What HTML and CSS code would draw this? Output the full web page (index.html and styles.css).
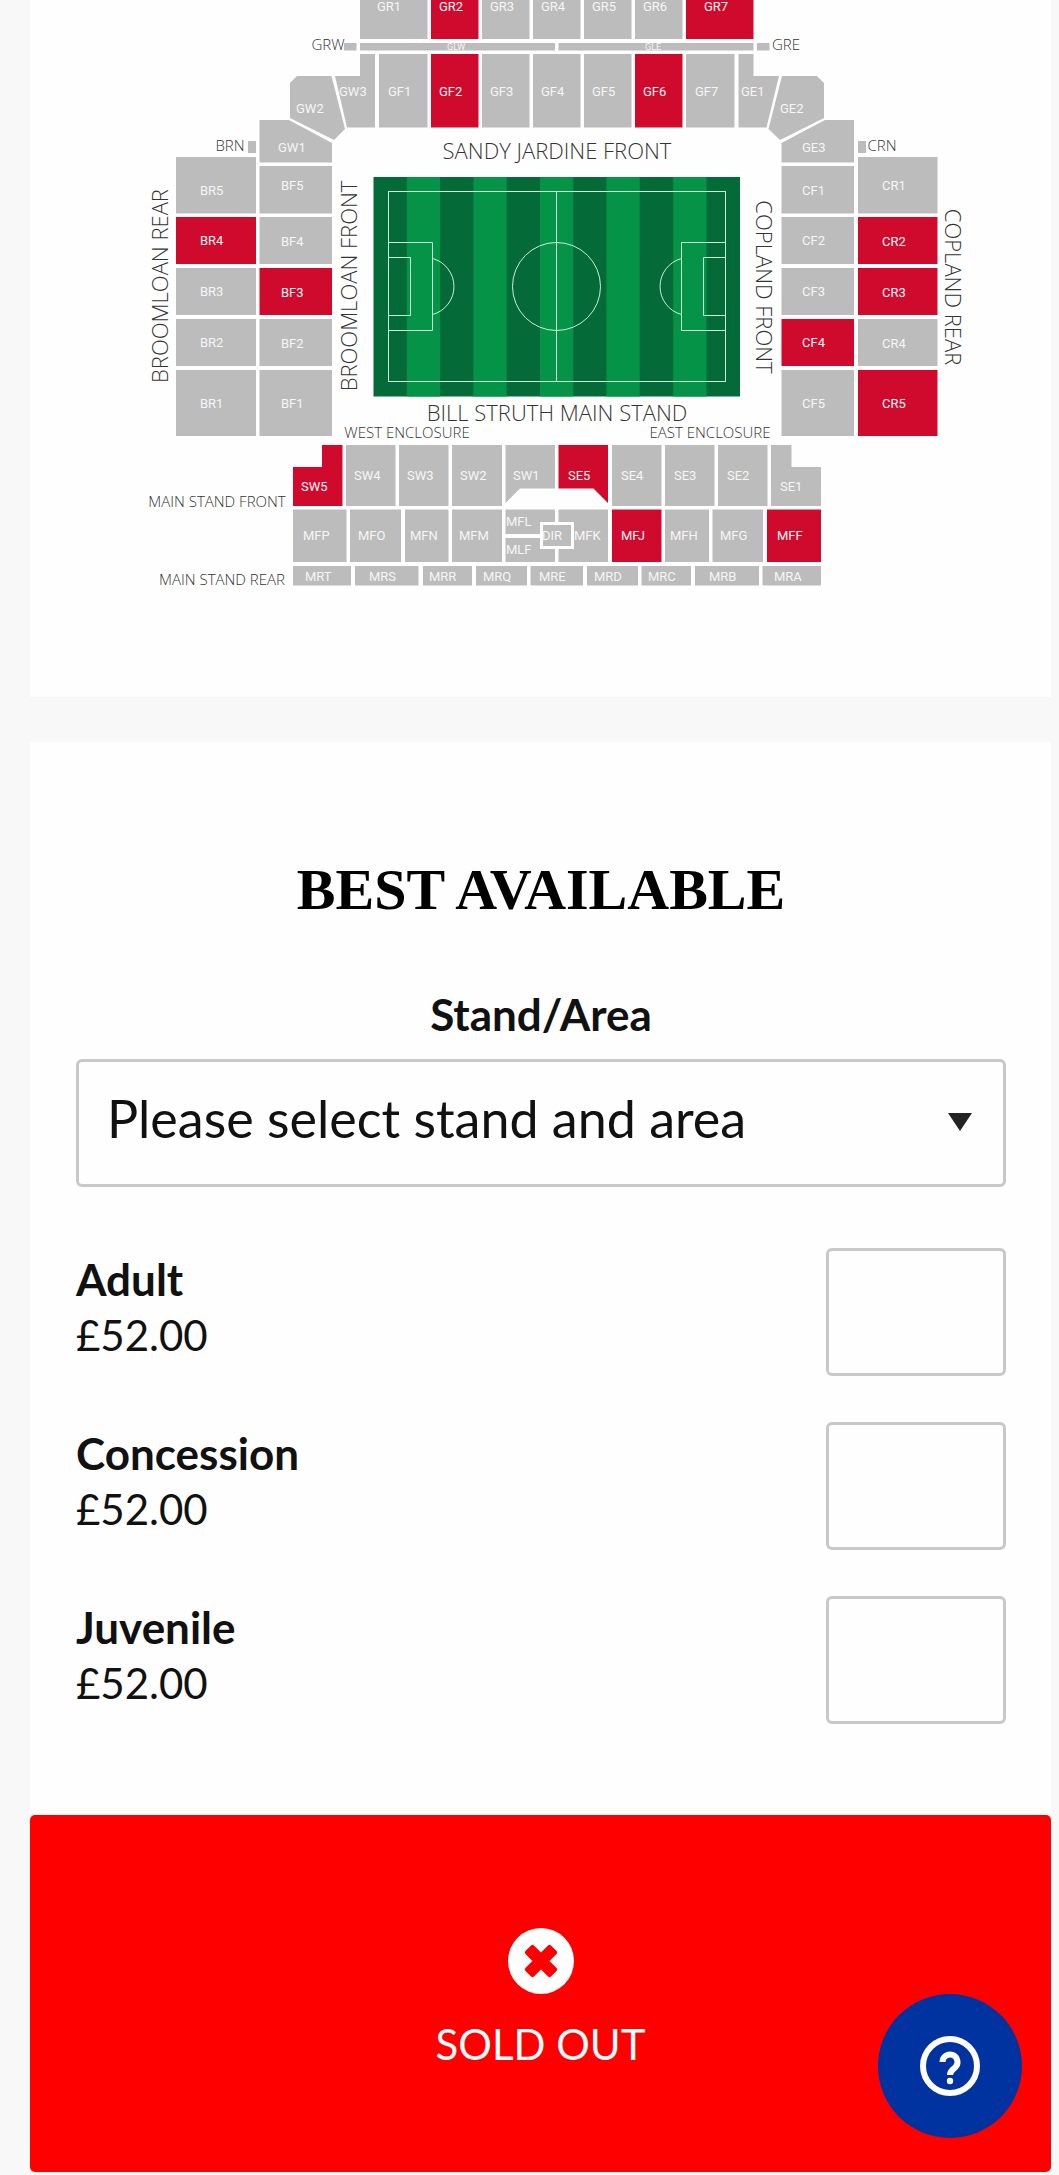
FILE: index.html
```html
<!DOCTYPE html>
<html lang="en">
<head>
    <meta charset="utf-8">
    <meta name="viewport" content="width=device-width, initial-scale=1.0">
    <title>Best Available</title>
    <link rel="stylesheet" href="styles.css">
</head>
<body>
<main class="page">
    <!--stadium map-->
    <section class="card map">
        <svg class="stadium" viewBox="30 0 1021 697" role="img" aria-label="Stadium map">
            <!--grandstand-->
            <g class="seats">
                <rect x="360" y="-30" width="67.5" height="69"/>
                <rect class="on" x="431" y="-30" width="47.5" height="69"/>
                <rect x="482" y="-30" width="47.5" height="69"/>
                <rect x="533" y="-30" width="47.5" height="69"/>
                <rect x="584" y="-30" width="47.5" height="69"/>
                <rect x="635" y="-30" width="47.5" height="69"/>
                <rect class="on" x="686" y="-30" width="67.5" height="69"/>
                <rect x="344" y="43" width="12.5" height="7.5"/>
                <rect x="360" y="43" width="195" height="7.5"/>
                <rect x="558.5" y="43" width="195" height="7.5"/>
                <rect x="757" y="43" width="12.5" height="7.5"/>
                <rect x="379" y="54" width="48.5" height="73.5"/>
                <rect class="on" x="431" y="54" width="47.5" height="73.5"/>
                <rect x="482" y="54" width="47.5" height="73.5"/>
                <rect x="533" y="54" width="47.5" height="73.5"/>
                <rect x="584" y="54" width="47.5" height="73.5"/>
                <rect class="on" x="635" y="54" width="47.5" height="73.5"/>
                <rect x="686" y="54" width="48.5" height="73.5"/>
                <polygon points="360,54 375,54 375,127.5 347,127.5 335,76 360,76"/>
                <polygon points="297,76 331.5,76 345,129 334,140 290,118 290,83"/>
                <polygon points="259.5,120 289,120 332,143 332,162.5 259.5,162.5"/>
                <polygon points="738.5,54 753.5,54 753.5,76 779,76 766.5,127.5 738.5,127.5"/>
                <polygon points="782,76 817,76 824,83 824,118 780,140 768.5,129"/>
                <polygon points="781.5,143 825,120 854,120 854,162.5 781.5,162.5"/>
            </g>
            <!--broomloan-->
            <g class="seats">
                <rect x="248" y="141" width="8" height="12"/>
                <rect x="176" y="157" width="80" height="56.5"/>
                <rect class="on" x="176" y="217" width="80" height="47"/>
                <rect x="176" y="268" width="80" height="47"/>
                <rect x="176" y="319" width="80" height="47"/>
                <rect x="176" y="370" width="80" height="66"/>
                <rect x="259.5" y="166" width="72.5" height="47.5"/>
                <rect x="259.5" y="217" width="72.5" height="47"/>
                <rect class="on" x="259.5" y="268" width="72.5" height="47"/>
                <rect x="259.5" y="319" width="72.5" height="47"/>
                <rect x="259.5" y="370" width="72.5" height="66"/>
            </g>
            <!--copland-->
            <g class="seats">
                <rect x="858" y="141" width="8" height="12"/>
                <rect x="781.5" y="166" width="72.5" height="47.5"/>
                <rect x="781.5" y="217" width="72.5" height="47"/>
                <rect x="781.5" y="268" width="72.5" height="47"/>
                <rect class="on" x="781.5" y="319" width="72.5" height="47"/>
                <rect x="781.5" y="370" width="72.5" height="66"/>
                <rect x="858" y="157" width="79.5" height="56.5"/>
                <rect class="on" x="858" y="217" width="79.5" height="47"/>
                <rect class="on" x="858" y="268" width="79.5" height="47"/>
                <rect x="858" y="319" width="79.5" height="47"/>
                <rect class="on" x="858" y="370" width="79.5" height="66"/>
            </g>
            <!--main stand-->
            <g class="seats">
                <polygon class="on" points="322,445 342.5,445 342.5,506 293,506 293,467 322,467"/>
                <rect x="346" y="445" width="49.5" height="61"/>
                <rect x="399" y="445" width="49.5" height="61"/>
                <rect x="452" y="445" width="50" height="61"/>
                <polygon points="505.5,445 555,445 555,488.5 520,488.5 505.5,503"/>
                <polygon class="on" points="558.5,445 608,445 608,503 593.5,488.5 558.5,488.5"/>
                <rect x="612" y="445" width="49.5" height="61"/>
                <rect x="665" y="445" width="49.5" height="61"/>
                <rect x="718" y="445" width="49.5" height="61"/>
                <polygon points="771,445 791.5,445 791.5,467 821,467 821,506 771,506"/>
                <rect x="293" y="509.5" width="53.5" height="52.5"/>
                <rect x="350" y="509.5" width="51" height="52.5"/>
                <rect x="405" y="509.5" width="43.5" height="52.5"/>
                <rect x="452" y="509.5" width="50" height="52.5"/>
                <rect x="505.5" y="509.5" width="49.5" height="24.5"/>
                <rect x="505.5" y="538" width="49.5" height="24"/>
                <rect x="558.5" y="509.5" width="49.5" height="52.5"/>
                <rect class="dir" x="541.5" y="523.5" width="31" height="24"/>
                <rect class="on" x="612" y="509.5" width="49.5" height="52.5"/>
                <rect x="665" y="509.5" width="44" height="52.5"/>
                <rect x="712.5" y="509.5" width="50.5" height="52.5"/>
                <rect class="on" x="767" y="509.5" width="54" height="52.5"/>
                <rect x="293" y="566" width="58" height="19.5"/>
                <rect x="355" y="566" width="63.5" height="19.5"/>
                <rect x="423" y="566" width="49" height="19.5"/>
                <rect x="476" y="566" width="51" height="19.5"/>
                <rect x="530.5" y="566" width="52.5" height="19.5"/>
                <rect x="587" y="566" width="51" height="19.5"/>
                <rect x="641.5" y="566" width="49.5" height="19.5"/>
                <rect x="695" y="566" width="64" height="19.5"/>
                <rect x="762.5" y="566" width="58.5" height="19.5"/>
            </g>
            <g class="codes">
                <text x="377" y="11">GR1</text><text x="439" y="11">GR2</text><text x="490" y="11">GR3</text>
                <text x="541" y="11">GR4</text><text x="592" y="11">GR5</text><text x="643" y="11">GR6</text>
                <text x="704" y="11">GR7</text>
                <text class="tiny" x="447" y="50">GLW</text><text class="tiny" x="645" y="50">GLE</text>
                <text x="339" y="96">GW3</text><text x="388" y="96">GF1</text><text x="439" y="96">GF2</text>
                <text x="490" y="96">GF3</text><text x="541" y="96">GF4</text><text x="592" y="96">GF5</text>
                <text x="643" y="96">GF6</text><text x="695" y="96">GF7</text><text x="741" y="96">GE1</text>
                <text x="296" y="113">GW2</text><text x="780" y="113">GE2</text>
                <text x="278" y="152">GW1</text><text x="802" y="152">GE3</text>
                <text x="200" y="195">BR5</text><text x="200" y="245">BR4</text><text x="200" y="296">BR3</text>
                <text x="200" y="347">BR2</text><text x="200" y="408">BR1</text>
                <text x="281" y="190">BF5</text><text x="281" y="246">BF4</text><text x="281" y="297">BF3</text>
                <text x="281" y="348">BF2</text><text x="281" y="408">BF1</text>
                <text x="802" y="195">CF1</text><text x="802" y="245">CF2</text><text x="802" y="296">CF3</text>
                <text x="802" y="347">CF4</text><text x="802" y="408">CF5</text>
                <text x="882" y="190">CR1</text><text x="882" y="246">CR2</text><text x="882" y="297">CR3</text>
                <text x="882" y="348">CR4</text><text x="882" y="408">CR5</text>
                <text x="301" y="491">SW5</text><text x="354" y="480">SW4</text><text x="407" y="480">SW3</text>
                <text x="460" y="480">SW2</text><text x="513" y="480">SW1</text><text x="568" y="480">SE5</text>
                <text x="621" y="480">SE4</text><text x="674" y="480">SE3</text><text x="727" y="480">SE2</text>
                <text x="780" y="491">SE1</text>
                <text x="303" y="540">MFP</text><text x="358" y="540">MFO</text><text x="410" y="540">MFN</text>
                <text x="459" y="540">MFM</text><text x="506" y="526">MFL</text><text x="506" y="554">MLF</text>
                <text x="542" y="540">DIR</text><text x="574" y="540">MFK</text><text x="621" y="540">MFJ</text>
                <text x="670" y="540">MFH</text><text x="720" y="540">MFG</text><text x="777" y="540">MFF</text>
                <text x="305" y="581">MRT</text><text x="369" y="581">MRS</text><text x="429" y="581">MRR</text>
                <text x="483" y="581">MRQ</text><text x="539" y="581">MRE</text><text x="594" y="581">MRD</text>
                <text x="648" y="581">MRC</text><text x="709" y="581">MRB</text><text x="774" y="581">MRA</text>
            </g>
            <g class="stands">
                <text x="557" y="159">SANDY JARDINE FRONT</text>
                <text x="557" y="421">BILL STRUTH MAIN STAND</text>
                <text transform="translate(168 286) rotate(-90)">BROOMLOAN REAR</text>
                <text transform="translate(357 286) rotate(-90)">BROOMLOAN FRONT</text>
                <text transform="translate(756 287) rotate(90)">COPLAND FRONT</text>
                <text transform="translate(945 287) rotate(90)">COPLAND REAR</text>
            </g>
            <g class="stands small">
                <text x="328" y="50">GRW</text><text x="786" y="50">GRE</text>
                <text x="230" y="151">BRN</text><text x="882" y="151">CRN</text>
                <text x="407" y="438">WEST ENCLOSURE</text><text x="710" y="438">EAST ENCLOSURE</text>
                <text x="217" y="507">MAIN STAND FRONT</text><text x="222" y="585">MAIN STAND REAR</text>
            </g>
            <!--pitch-->
            <rect class="grass" x="373.5" y="177" width="366.5" height="219.5"/>
            <path class="stripe" d="M406.8 177h33.3v219.5h-33.3zM473.4 177h33.3v219.5h-33.3zM540 177h33.3v219.5h-33.3zM606.4 177h33.3v219.5h-33.3zM673.2 177h33.3v219.5h-33.3z"/>
            <g class="lines">
                <rect x="388.5" y="191.5" width="337" height="190"/>
                <path d="M556.5 191.5v190M388.5 242.5h44v88h-44M388.5 257.5h22v58h-22M725.5 242.5h-44v88h44M725.5 257.5h-22v58h22"/>
                <circle cx="556.5" cy="286.5" r="44"/>
                <path d="M432.5 258.5a29 29 0 0 1 0 56M681.5 258.5a29 29 0 0 0 0 56"/>
            </g>
        </svg>
    </section>

    <!--best available-->
    <form class="card best">
        <div class="fields">
            <h2>BEST AVAILABLE</h2>
            <label class="area_label" for="area">Stand/Area</label>
            <div class="select">
                <select id="area">
                    <option>Please select stand and area</option>
                </select>
            </div>
            <div class="row">
                <label for="adult"><b>Adult</b><span>£52.00</span></label>
                <input id="adult" type="text" inputmode="numeric">
            </div>
            <div class="row">
                <label for="concession"><b>Concession</b><span>£52.00</span></label>
                <input id="concession" type="text" inputmode="numeric">
            </div>
            <div class="row">
                <label for="juvenile"><b>Juvenile</b><span>£52.00</span></label>
                <input id="juvenile" type="text" inputmode="numeric">
            </div>
        </div>
        <div class="sold_out">
            <svg viewBox="0 0 66 66" aria-hidden="true">
                <circle cx="33" cy="33" r="33" fill="#fff"/>
                <g fill="#f00" transform="rotate(45 33 33)">
                    <rect x="15" y="27" width="36" height="12" rx="2"/>
                    <rect x="27" y="15" width="12" height="36" rx="2"/>
                </g>
            </svg>
            <span>SOLD OUT</span>
        </div>
    </form>
</main>
<button class="help" type="button" aria-label="Help">
    <svg viewBox="0 0 60 60" aria-hidden="true">
        <circle cx="30" cy="30" r="27" stroke-width="6"/>
        <path d="M22.5 26a7.5 7.5 0 1 1 12.8 5.3C32.5 34 30 35 30 39" stroke-width="6"/>
        <circle class="dot" cx="30" cy="45" r="3.2"/>
    </svg>
</button>
</body>
</html>
```
FILE: styles.css
```css
html,body,h2,form{margin:0;padding:0;}
*{box-sizing:border-box;}
body{
    background-color:#f8f8f8;
    color:#111;
    font-family:Lato, "Open Sans", sans-serif;
    font-size:42px;
    line-height:56px;
}
.page{
    display:flex;
    flex-direction:column;
    gap:45px;
    padding:0 8px 4px 30px;
}
.card{background-color:#fefefe;}

/*map*/
.stadium{display:block;width:100%;height:auto;}
.seats{fill:#bcbcbc;}
.seats .on{fill:#d00a2c;}
.seats .dir{stroke:#fefefe;stroke-width:3px;}
.codes{
    fill:#f6f6f6;
    font-family:Roboto, sans-serif;
    font-size:13px;
}
.codes .tiny{font-size:9px;}
.stands{
    fill:#333;
    font-family:"Open Sans", sans-serif;
    font-size:22px;
    font-weight:300;
    text-anchor:middle;
}
.small{font-size:15px;}
.grass{fill:#046a38;}
.stripe{fill:#059447;}
.lines{fill:none;stroke:#c8f0d8;stroke-width:1px;}

/*best available*/
.fields{
    display:flex;
    flex-direction:column;
    padding:112px 45px 91px 46px;
}
h2{
    color:#000;
    font-family:"Liberation Serif", serif;
    font-size:58px;
    line-height:72px;
    text-align:center;
}
.area_label{
    margin-top:60px;
    font-size:44px;
    font-weight:bold;
    text-align:center;
}
.select{
    position:relative;
    margin:17px 0 61px;
}
.select:after{
    content:"";
    position:absolute;
    right:34px;
    top:54px;
    border:12px solid transparent;
    border-top:18px solid #222;
    border-bottom:0;
    pointer-events:none;
}
select,input{
    height:128px;
    border:3px solid #c8c8c8;
    border-radius:6px;
    background-color:#fefefe;
    color:#111;
    font-family:inherit;
}
select{
    display:block;
    width:100%;
    padding:0 60px 10px 28px;
    font-size:52px;
    -webkit-appearance:none;
    appearance:none;
}
input{
    width:180px;
    padding:0 24px;
    font-size:42px;
}
.row{
    display:flex;
    justify-content:space-between;
}
.row+.row{margin-top:46px;}
.row label{
    display:flex;
    flex-direction:column;
    padding-top:3px;
}
.row b{font-size:44px;}
.sold_out{
    display:flex;
    flex-direction:column;
    align-items:center;
    gap:22px;
    padding:113px 0 100px;
    border-radius:5px;
    background-color:#f00;
    color:#fff;
}
.sold_out svg{width:66px;height:66px;}

.help{
    position:fixed;
    right:37px;
    bottom:37px;
    display:flex;
    align-items:center;
    justify-content:center;
    width:144px;
    height:144px;
    padding:0;
    border:0;
    border-radius:50%;
    background-color:#0033a0;
}
.help svg{
    width:60px;
    height:60px;
    fill:none;
    stroke:#fff;
}
.help .dot{fill:#fff;stroke:none;}
```
